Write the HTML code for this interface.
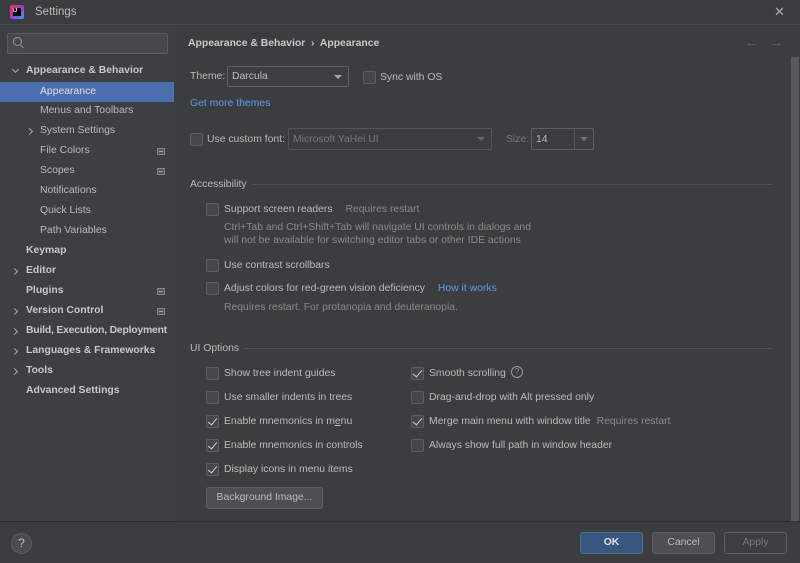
<!DOCTYPE html>
<html><head><meta charset="utf-8"><style>
*{margin:0;padding:0;box-sizing:border-box}
body{width:800px;height:563px;background:#3c3f41;font-family:"Liberation Sans","Noto Sans CJK SC",sans-serif;font-size:10.4px;color:#bbbbbb;position:relative;overflow:hidden}
.a{position:absolute;white-space:nowrap}
.title{left:0;top:0;width:800px;height:25px;background:#3b3c3e;border-bottom:1px solid #4a4b4d}
.side{left:0;top:25px;width:175px;height:496px;background:#3c3f44}
.content{left:175px;top:25px;width:625px;height:496px;background:#3c3d3f}
.bottom{left:0;top:521px;width:800px;height:42px;background:#3c3d3f;border-top:1px solid #2f3032}
.it{position:absolute;left:0;width:175px;height:20px;line-height:20px;white-space:nowrap}
.it span{white-space:nowrap}
.b{font-weight:bold;color:#c8c8c8}
.cb{position:absolute;width:13px;height:13px;border:1px solid #5c5e60;background:#45484a;border-radius:2px}
.cb.c::after{content:"";position:absolute;left:3px;top:0px;width:4px;height:8px;border:solid #ccc;border-width:0 1.5px 1.5px 0;transform:rotate(40deg)}
.t{position:absolute;line-height:14px;white-space:nowrap}
.g{color:#8a8a8a}
.link{color:#589df6}
.arr{position:absolute;width:5px;height:5px;border:solid #aaa;border-width:0 1.3px 1.3px 0}
.ic{position:absolute;left:157px;width:8px;height:7px;border:1px solid #888;background:#555}
.ic::after{content:"";position:absolute;left:1px;top:2px;width:4px;height:1px;background:#aaa}
.btn{position:absolute;height:22px;border:1px solid #5e6062;border-radius:3px;background:#4c5052;text-align:center;line-height:20px;color:#bbb}
</style></head><body>
<div class="a title"></div>
<div class="a" style="left:10px;top:5px;width:14px;height:14px;background:linear-gradient(135deg,#e34 0%,#a3c 50%,#2af 100%);border-radius:2px"><div style="position:absolute;left:3px;top:3px;width:8px;height:8px;background:#000;color:#fff;font-size:5px;line-height:6px;font-weight:bold">IJ</div></div>
<div class="a" style="left:35px;top:6px;font-size:11.5px;color:#bbb">Settings</div>
<div class="a" style="left:774px;top:4px;font-size:13px;color:#aaa">✕</div>

<div class="a side"></div>
<div class="a content"></div>
<div class="a bottom"></div>

<div class="a" style="left:7px;top:33px;width:161px;height:21px;border:1px solid #5a5d60;border-radius:2px;background:#45494a"></div>
<div class="a" style="left:13px;top:37px;width:9px;height:9px;border:1.3px solid #999;border-radius:50%"></div>
<div class="a" style="left:20px;top:46px;width:4px;height:1.3px;background:#999;transform:rotate(45deg)"></div>

<div class="it" style="top:61px"><span class="arr" style="left:13px;top:6px;transform:rotate(45deg)"></span><span class="b" style="position:absolute;left:26px">Appearance &amp; Behavior</span></div>
<div class="it" style="top:82px;background:#4b6eaf;color:#e0e0e0;width:174px"><span style="position:absolute;left:40px">Appearance</span></div>
<div class="it" style="top:101px"><span style="position:absolute;left:40px">Menus and Toolbars</span></div>
<div class="it" style="top:121px"><span class="arr" style="left:27px;top:8px;transform:rotate(-45deg)"></span><span style="position:absolute;left:40px">System Settings</span></div>
<div class="it" style="top:141px"><span style="position:absolute;left:40px">File Colors</span><span class="ic" style="top:7px"></span></div>
<div class="it" style="top:161px"><span style="position:absolute;left:40px">Scopes</span><span class="ic" style="top:7px"></span></div>
<div class="it" style="top:181px"><span style="position:absolute;left:40px">Notifications</span></div>
<div class="it" style="top:201px"><span style="position:absolute;left:40px">Quick Lists</span></div>
<div class="it" style="top:221px"><span style="position:absolute;left:40px">Path Variables</span></div>
<div class="it" style="top:241px"><span class="b" style="position:absolute;left:26px">Keymap</span></div>
<div class="it" style="top:261px"><span class="arr" style="left:12px;top:8px;transform:rotate(-45deg)"></span><span class="b" style="position:absolute;left:26px">Editor</span></div>
<div class="it" style="top:281px"><span class="b" style="position:absolute;left:26px">Plugins</span><span class="ic" style="top:7px"></span></div>
<div class="it" style="top:301px"><span class="arr" style="left:12px;top:8px;transform:rotate(-45deg)"></span><span class="b" style="position:absolute;left:26px">Version Control</span><span class="ic" style="top:7px"></span></div>
<div class="it" style="top:321px"><span class="arr" style="left:12px;top:8px;transform:rotate(-45deg)"></span><span class="b" style="position:absolute;left:26px;letter-spacing:-0.2px">Build, Execution, Deployment</span></div>
<div class="it" style="top:341px"><span class="arr" style="left:12px;top:8px;transform:rotate(-45deg)"></span><span class="b" style="position:absolute;left:26px">Languages &amp; Frameworks</span></div>
<div class="it" style="top:361px"><span class="arr" style="left:12px;top:8px;transform:rotate(-45deg)"></span><span class="b" style="position:absolute;left:26px">Tools</span></div>
<div class="it" style="top:381px"><span class="b" style="position:absolute;left:26px">Advanced Settings</span></div>

<div class="t b" style="left:188px;top:37px">Appearance &amp; Behavior &nbsp;›&nbsp; Appearance</div>
<div class="a" style="left:745px;top:34px;color:#666;font-size:14px">←</div>
<div class="a" style="left:769px;top:34px;color:#666;font-size:14px">→</div>
<div class="a" style="left:791px;top:57px;width:8px;height:464px;background:#58595b"></div>

<div class="t" style="left:190px;top:70px">Theme:</div>
<div class="a" style="left:227px;top:66px;width:122px;height:21px;border:1px solid #5e6062;border-radius:2px;background:#3c3f41"></div>
<div class="t" style="left:232px;top:70px">Darcula</div>
<div class="a" style="left:334px;top:75px;border:4px solid transparent;border-top:4px solid #aaa"></div>
<div class="cb" style="left:363px;top:71px"></div><div class="t" style="left:380px;top:71px">Sync with OS</div>
<div class="t link" style="left:190px;top:97px">Get more themes</div>

<div class="cb" style="left:190px;top:133px"></div><div class="t" style="left:207px;top:133px">Use custom font:</div>
<div class="a" style="left:288px;top:128px;width:204px;height:22px;border:1px solid #555;border-radius:2px"></div>
<div class="t" style="left:293px;top:133px;color:#777">Microsoft YaHei UI</div>
<div class="a" style="left:477px;top:137px;border:4px solid transparent;border-top:4px solid #666"></div>
<div class="t g" style="left:506px;top:133px;color:#777">Size:</div>
<div class="a" style="left:531px;top:128px;width:63px;height:22px;border:1px solid #5e6062;border-radius:2px"></div>
<div class="a" style="left:574px;top:129px;width:1px;height:20px;background:#555"></div>
<div class="t" style="left:536px;top:133px">14</div>
<div class="a" style="left:580px;top:137px;border:4px solid transparent;border-top:4px solid #777"></div>

<div class="t" style="left:190px;top:178px">Accessibility</div>
<div class="a" style="left:252px;top:184px;width:521px;height:1px;background:#4e5052"></div>
<div class="cb" style="left:206px;top:203px"></div><div class="t" style="left:224px;top:203px">Support screen readers <span class="g" style="margin-left:10px">Requires restart</span></div>
<div class="t g" style="left:224px;top:221px">Ctrl+Tab and Ctrl+Shift+Tab will navigate UI controls in dialogs and</div>
<div class="t g" style="left:224px;top:234px">will not be available for switching editor tabs or other IDE actions</div>
<div class="cb" style="left:206px;top:259px"></div><div class="t" style="left:224px;top:259px">Use contrast scrollbars</div>
<div class="cb" style="left:206px;top:282px"></div><div class="t" style="left:224px;top:282px">Adjust colors for red-green vision deficiency <span class="link" style="margin-left:10px">How it works</span></div>
<div class="t g" style="left:224px;top:301px">Requires restart. For protanopia and deuteranopia.</div>

<div class="t" style="left:190px;top:342px">UI Options</div>
<div class="a" style="left:243px;top:348px;width:530px;height:1px;background:#4e5052"></div>
<div class="cb" style="left:206px;top:367px"></div><div class="t" style="left:224px;top:367px">Show tree indent guides</div>
<div class="cb" style="left:206px;top:391px"></div><div class="t" style="left:224px;top:391px">Use smaller indents in trees</div>
<div class="cb c" style="left:206px;top:415px"></div><div class="t" style="left:224px;top:415px">Enable mnemonics in m<u>e</u>nu</div>
<div class="cb c" style="left:206px;top:439px"></div><div class="t" style="left:224px;top:439px">Enable mnemonics in controls</div>
<div class="cb c" style="left:206px;top:463px"></div><div class="t" style="left:224px;top:463px">Display icons in menu items</div>
<div class="btn" style="left:206px;top:487px;width:117px">Background Image...</div>

<div class="cb c" style="left:411px;top:367px"></div><div class="t" style="left:429px;top:367px">Smooth scrolling</div>
<div class="a" style="left:511px;top:366px;width:12px;height:12px;border:1px solid #999;border-radius:50%;font-size:8px;line-height:10px;text-align:center;color:#999">?</div>
<div class="cb" style="left:411px;top:391px"></div><div class="t" style="left:429px;top:391px">Drag-and-drop with Alt pressed only</div>
<div class="cb c" style="left:411px;top:415px"></div><div class="t" style="left:429px;top:415px">Merge main menu with window title <span class="g" style="margin-left:3px">Requires restart</span></div>
<div class="cb" style="left:411px;top:439px"></div><div class="t" style="left:429px;top:439px">Always show full path in window header</div>

<div class="a" style="left:11px;top:533px;width:21px;height:21px;border-radius:50%;background:#4a4d50;border:1px solid #5a5d60;text-align:center;line-height:19px;color:#bbb;font-size:12px">?</div>
<div class="btn" style="left:580px;top:532px;width:63px;background:#365880;border-color:#4c708c;color:#e0e0e0;font-weight:bold">OK</div>
<div class="btn" style="left:652px;top:532px;width:63px">Cancel</div>
<div class="btn" style="left:724px;top:532px;width:63px;background:#3c3f41;color:#777">Apply</div>
</body></html>
